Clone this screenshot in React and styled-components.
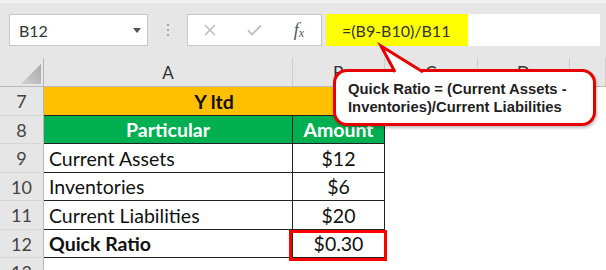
import React from 'react';
import styled, { createGlobalStyle } from 'styled-components';

const GlobalStyle = createGlobalStyle`
  html, body { margin: 0; padding: 0; background: #fff; }
  body { font-family: Lato, "Open Sans", sans-serif; }
`;

const Page = styled.div`
  position: relative;
  width: 606px;
  height: 270px;
  overflow: hidden;
  background: #fff;
`;

const Toolbar = styled.div`
  height: 58px;
  box-sizing: border-box;
  background: #e6e6e6;
  border-top: 3px solid #efefef;
  padding: 11px 6px 0 9px;
  display: flex;
  align-items: flex-start;
`;

const NameBox = styled.div`
  width: 139px;
  height: 32px;
  box-sizing: border-box;
  background: #fff;
  border: 1px solid #c8c8c8;
  display: flex;
  align-items: center;
  justify-content: space-between;
  padding: 0 6px 0 9px;
  font-size: 16px;
  color: #333;
`;

const Caret = styled.span`
  width: 0;
  height: 0;
  border-left: 4px solid transparent;
  border-right: 4px solid transparent;
  border-top: 5px solid #555;
`;

const Grip = styled.div`
  width: 39px;
  height: 32px;
  display: flex;
  flex-direction: column;
  align-items: center;
  justify-content: center;
  gap: 3px;

  span {
    width: 2px;
    height: 2px;
    background: #a8a8a8;
  }
`;

const FxBox = styled.div`
  width: 135px;
  height: 32px;
  box-sizing: border-box;
  background: #fff;
  border: 1px solid #c8c8c8;
  display: grid;
  grid-template-columns: repeat(3, 1fr);
  align-items: center;
  justify-items: center;
`;

const Fx = styled.span`
  font-family: "Liberation Serif", serif;
  font-style: italic;
  font-size: 18px;
  color: #555;

  sub {
    font-size: 12px;
    vertical-align: -1px;
  }
`;

const FormulaInput = styled.div`
  flex: 1;
  margin-left: 4px;
  height: 32px;
  background: #fff;
  display: flex;
`;

const Highlight = styled.div`
  width: 142px;
  background: #ffff00;
  display: flex;
  align-items: center;
  padding-left: 16px;
  box-sizing: border-box;
  font-size: 16px;
  color: #333;
`;

const Sheet = styled.div`
  display: grid;
  grid-template-columns: 44px 249px 92px 93px 92px 1fr;
  grid-template-rows: 29px 29px 28px 29px 28px 29px 28px 28px;
`;

const Corner = styled.div`
  position: relative;
  background: #e6e6e6;
  border-right: 1px solid #b9b9b9;
  border-bottom: 1px solid #b9b9b9;

  svg {
    position: absolute;
    left: 0;
    top: 0;
  }
`;

const ColHead = styled.div`
  background: #e6e6e6;
  border-right: 1px solid #cdcdcd;
  border-bottom: 1px solid #b9b9b9;
  display: flex;
  align-items: center;
  justify-content: center;
  font-size: 17px;
  color: #333;
`;

const RowHead = styled.div`
  background: #e6e6e6;
  border-right: 1px solid #b9b9b9;
  border-bottom: 1px solid #d6d6d6;
  display: flex;
  align-items: center;
  justify-content: center;
  font-size: 18px;
  color: #444;
`;

const Cell = styled.div`
  position: relative;
  box-sizing: border-box;
  grid-column: span ${p => p.span || 1};
  background: ${p => p.bg || '#fff'};
  color: ${p => p.color || '#111'};
  font-weight: ${p => (p.bold ? 700 : 400)};
  border-right: 1px solid #222;
  border-bottom: 1px solid #222;
  display: flex;
  align-items: center;
  justify-content: ${p => (p.left ? 'flex-start' : 'center')};
  padding-left: ${p => (p.left ? '5px' : '0')};
  font-size: 19.5px;
  white-space: nowrap;
`;

const Blank = styled.div`
  background: #fff;
`;

const RedFrame = styled.div`
  position: absolute;
  top: 0;
  left: -4px;
  right: -3px;
  bottom: -4px;
  border: 3px solid #ff0000;
  z-index: 2;
`;

const Callout = styled.div`
  position: absolute;
  left: 333px;
  top: 69px;
  width: 263px;
  height: 57px;
  box-sizing: border-box;
  background: #fff;
  border: 3px solid #e60000;
  border-radius: 14px;
  box-shadow: 1px 2px 3px rgba(0, 0, 0, 0.25);
  padding: 8px 0 0 12px;
  font-family: "Liberation Sans", Arial, sans-serif;
  font-weight: 700;
  font-size: 14.8px;
  line-height: 18px;
  color: #1f1f1f;
  z-index: 3;

  svg {
    position: absolute;
    left: 36px;
    top: -28px;
    overflow: visible;
  }
`;

const rows = [
  { n: 9, label: 'Current Assets', value: '$12' },
  { n: 10, label: 'Inventories', value: '$6' },
  { n: 11, label: 'Current Liabilities', value: '$20' },
];

const Fillers = () => (
  <>
    <Blank />
    <Blank />
    <Blank />
  </>
);

const App = () => (
  <Page>
    <GlobalStyle />
    <Toolbar>
      <NameBox>
        B12
        <Caret />
      </NameBox>
      <Grip>
        <span />
        <span />
        <span />
      </Grip>
      <FxBox>
        <svg width="12" height="12" viewBox="0 0 12 12">
          <path d="M1 1 L11 11 M11 1 L1 11" stroke="#bdbdbd" strokeWidth="1.5" fill="none" />
        </svg>
        <svg width="15" height="12" viewBox="0 0 15 12">
          <path d="M1 6.5 L5 10.5 L14 1.5" stroke="#bdbdbd" strokeWidth="1.8" fill="none" />
        </svg>
        <Fx>
          f<sub>x</sub>
        </Fx>
      </FxBox>
      <FormulaInput>
        <Highlight>=(B9-B10)/B11</Highlight>
      </FormulaInput>
    </Toolbar>

    <Sheet>
      <Corner>
        <svg width="44" height="28">
          <defs>
            <linearGradient id="tri" x1="0" y1="1" x2="1" y2="0">
              <stop offset="0" stopColor="#d0d0d0" />
              <stop offset="1" stopColor="#a8a8a8" />
            </linearGradient>
          </defs>
          <polygon points="21,26 41,26 41,6" fill="url(#tri)" />
        </svg>
      </Corner>
      <ColHead>A</ColHead>
      <ColHead>B</ColHead>
      <ColHead>C</ColHead>
      <ColHead>D</ColHead>
      <ColHead />

      <RowHead>7</RowHead>
      <Cell span={2} bg="#ffc000" bold>Y ltd</Cell>
      <Fillers />

      <RowHead>8</RowHead>
      <Cell bg="#00b050" color="#fff" bold>Particular</Cell>
      <Cell bg="#00b050" color="#fff" bold>Amount</Cell>
      <Fillers />

      {rows.map(r => (
        <React.Fragment key={r.n}>
          <RowHead>{r.n}</RowHead>
          <Cell left>{r.label}</Cell>
          <Cell>{r.value}</Cell>
          <Fillers />
        </React.Fragment>
      ))}

      <RowHead>12</RowHead>
      <Cell left bold>Quick Ratio</Cell>
      <Cell>
        $0.30
        <RedFrame />
      </Cell>
      <Fillers />

      <RowHead>13</RowHead>
      <Blank />
      <Blank />
      <Fillers />
    </Sheet>

    <Callout>
      <svg width="60" height="32">
        <polygon points="23,29 9,2 51,29" fill="#fff" />
        <polyline points="23,28 9,2 51,28" fill="none" stroke="#e60000" strokeWidth="3" strokeLinejoin="miter" />
      </svg>
      Quick Ratio = (Current Assets -
      <br />
      Inventories)/Current Liabilities
    </Callout>
  </Page>
);

export default App;
